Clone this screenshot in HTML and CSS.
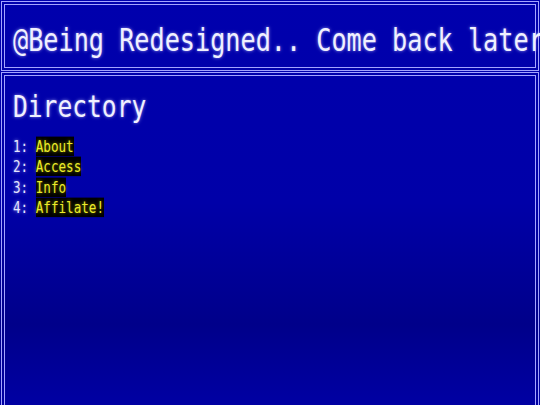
FILE: index.html
```html
<!DOCTYPE html>
<html lang="en">
<head>
<meta charset="utf-8">
<title>Directory</title>
<link rel="stylesheet" href="styles.css">
</head>
<body>
<header class="banner">
  <span class="tall banner-text">@Being Redesigned.. Come back later</span>
</header>
<main class="panel">
  <h1 class="heading"><span class="tall">Directory</span></h1>
  <ol class="dir-list">
    <li><span class="tall"><span class="num">1: </span><a class="link" href="#">About</a></span></li>
    <li><span class="tall"><span class="num">2: </span><a class="link" href="#">Access</a></span></li>
    <li><span class="tall"><span class="num">3: </span><a class="link" href="#">Info</a></span></li>
    <li><span class="tall"><span class="num">4: </span><a class="link" href="#">Affilate!</a></span></li>
  </ol>
</main>
</body>
</html>
```

FILE: styles.css
```css
html {
  overflow: hidden;
  height: 100%;
  background: linear-gradient(to bottom, #0000ad 0%, #0000a8 50%, #00008a 80%, #0000a3 100%);
}

body {
  margin: 0;
  padding: 1px;
  font-family: "DejaVu Sans Mono", "Liberation Mono", monospace;
  color: #f0f0ff;
  text-shadow: 0 0 3px rgba(200, 200, 255, 0.75);
}

.tall {
  display: inline-block;
  transform: scaleY(1.25);
  transform-origin: left center;
  white-space: nowrap;
}

.banner {
  border: 4px double #a4a4ff;
  padding: 9px 8px 0;
  height: 53px;
  display: flex;
  align-items: center;
  overflow: visible;
}

.banner-text {
  font-size: 25.2px;
  line-height: 30px;
}

.panel {
  margin-top: 1px;
  border: 4px double #a4a4ff;
  min-height: 420px;
  padding: 16px 8px 0;
}

.heading {
  margin: 0;
  font-weight: normal;
  font-size: 24.6px;
  line-height: 30px;
}

.dir-list {
  list-style: none;
  margin: 15px 0 0;
  padding: 0;
  font-size: 12.6px;
}

.dir-list li {
  height: 20.3px;
  line-height: 20px;
}

.dir-list .tall {
  transform: scaleY(1.3);
}

.num {
  color: #e4e4ff;
}

.link {
  color: #ecec2a;
  text-decoration: none;
  background: #000000;
  text-shadow: 0 0 3px rgba(255, 255, 0, 0.55);
}
```
